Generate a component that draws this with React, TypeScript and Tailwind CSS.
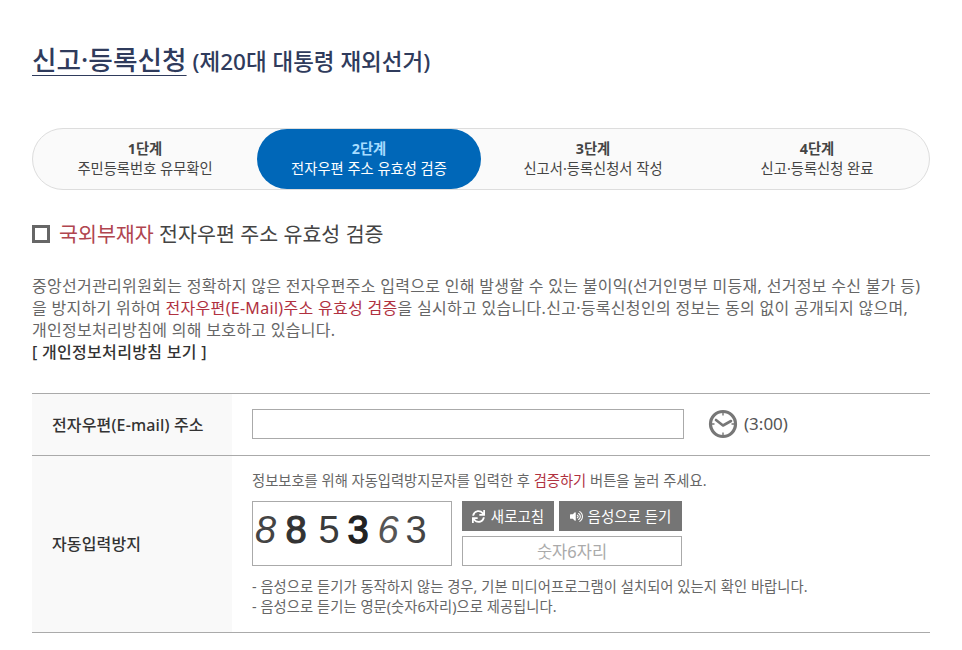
import { FaSync, FaVolumeUp } from 'react-icons/fa';

const steps = [
  { no: '1단계', label: '주민등록번호 유무확인' },
  { no: '2단계', label: '전자우편 주소 유효성 검증', active: true },
  { no: '3단계', label: '신고서·등록신청서 작성' },
  { no: '4단계', label: '신고·등록신청 완료' },
];

const digits = [
  { ch: '8', cls: 'italic text-[#444] w-[25px]' },
  { ch: '8', cls: 'text-[#333] w-[36px] [-webkit-text-stroke:1.2px_#333]' },
  { ch: '5', cls: 'text-[#3a3a3a] w-[30px]' },
  { ch: '3', cls: 'text-[#222] w-[28px] [-webkit-text-stroke:1.4px_#222]' },
  { ch: '6', cls: 'italic text-[#555] w-[32px]' },
  { ch: '3', cls: 'text-[#444] w-[24px]' },
];

function ClockIcon() {
  return (
    <svg width="30" height="30" viewBox="0 0 30 30" fill="none" stroke="#777">
      <circle cx="15" cy="15" r="12.5" strokeWidth="3.2" />
      <path d="M8 11 L15 16.5 L23 12" strokeWidth="2.6" strokeLinecap="round" strokeLinejoin="round" />
      <path d="M15 4v2.5M15 23.5v2.5M4 15h2.5M23.5 15h2.5" strokeWidth="1.4" />
    </svg>
  );
}

export default function App() {
  return (
    <div className="min-h-screen bg-white px-8 font-['Noto_Sans','Noto_Sans_CJK_KR',sans-serif] overflow-hidden">
      {/* Title */}
      <h1 className="pt-[42px] h-[128px] text-[#2f3b5c] leading-[36px] font-medium">
        <span className="text-[26.7px] underline underline-offset-[5px] decoration-1">신고·등록신청</span>
        <span className="text-[22.5px]"> (제20대 대통령 재외선거)</span>
      </h1>

      {/* Steps */}
      <div className="grid grid-cols-4 h-[62px] rounded-full border border-[#ddd] bg-[#fafafa]">
        {steps.map((s) => (
          <div
            key={s.no}
            className={`flex flex-col items-center justify-center rounded-full text-[14.3px] leading-[20px] ${s.active ? 'bg-[#0067b8] text-white' : 'text-[#444]'}`}
          >
            <span className={`font-bold ${s.active ? 'text-[#a6dcff]' : 'text-[#444]'}`}>{s.no}</span>
            <span>{s.label}</span>
          </div>
        ))}
      </div>

      {/* Section heading */}
      <div className="flex items-center gap-[9px] mt-[29px] h-[30px]">
        <span className="w-[18px] h-[18px] border-[3px] border-[#666]" />
        <h2 className="text-[20.6px] text-[#444]">
          <span className="text-[#b0454f]">국외부재자</span> 전자우편 주소 유효성 검증
        </h2>
      </div>

      {/* Intro */}
      <div className="mt-[26px] text-[16px] leading-[22px] text-[#666] tracking-[0.3px] whitespace-nowrap">
        <p>중앙선거관리위원회는 정확하지 않은 전자우편주소 입력으로 인해 발생할 수 있는 불이익(선거인명부 미등재, 선거정보 수신 불가 등)</p>
        <p>
          을 방지하기 위하여 <span className="text-[#b0313f]">전자우편(E-Mail)주소 유효성 검증</span>을 실시하고 있습니다.신고·등록신청인의 정보는 동의 없이 공개되지 않으며,
        </p>
        <p>개인정보처리방침에 의해 보호하고 있습니다.</p>
        <p className="font-medium text-[#333]">[ 개인정보처리방침 보기 ]</p>
      </div>

      {/* Form table */}
      <div className="mt-[30px] border-t border-b border-[#aaa]">
        <div className="flex h-[62px] border-b border-[#aaa]">
          <div className="w-[200px] bg-[#f9f9f9] pl-5 flex items-center text-[16px] tracking-[0.15px] font-medium text-[#333]">
            전자우편(E-mail) 주소
          </div>
          <div className="flex-1 pl-5 pb-[2px] flex items-center">
            <input className="w-[432px] h-[30px] border border-[#aaa] bg-white" />
            <span className="ml-[24px]"><ClockIcon /></span>
            <span className="ml-[6px] text-[17px] text-[#555]">(3:00)</span>
          </div>
        </div>
        <div className="flex h-[176px]">
          <div className="w-[200px] bg-[#f9f9f9] pl-5 flex items-center text-[16px] tracking-[0.15px] font-medium text-[#333]">
            자동입력방지
          </div>
          <div className="flex-1 pl-5 pt-[15px]">
            <p className="text-[14.3px] leading-[20px] text-[#666]">
              정보보호를 위해 자동입력방지문자를 입력한 후 <span className="text-[#b0313f]">검증하기</span> 버튼을 눌러 주세요.
            </p>
            <div className="flex gap-[10px] mt-[10px]">
              <div className="w-[200px] h-[65px] border border-[#aaa] flex items-center pb-[6px] text-[38px] font-['Liberation_Sans',sans-serif]">
                {digits.map((d, i) => (
                  <span key={i} className={`text-center ${d.cls}`}>{d.ch}</span>
                ))}
              </div>
              <div className="w-[220px]">
                <div className="flex gap-[5px]">
                  <button className="w-[92px] h-[30px] pt-[1px] bg-[#757575] text-white text-[14.5px] flex items-center justify-center gap-[6px]">
                    <FaSync size={13} />새로고침
                  </button>
                  <button className="w-[123px] h-[30px] pt-[1px] bg-[#757575] text-white text-[14.5px] flex items-center justify-center gap-[5px]">
                    <FaVolumeUp size={13} />음성으로 듣기
                  </button>
                </div>
                <input
                  placeholder="숫자6자리"
                  className="mt-[5px] w-[220px] h-[30px] border border-[#aaa] text-center text-[16.5px] placeholder:text-[#aaa]"
                />
              </div>
            </div>
            <div className="mt-[11px] text-[14.3px] tracking-[0.05px] leading-[20px] text-[#666]">
              <p>- 음성으로 듣기가 동작하지 않는 경우, 기본 미디어프로그램이 설치되어 있는지 확인 바랍니다.</p>
              <p>- 음성으로 듣기는 영문(숫자6자리)으로 제공됩니다.</p>
            </div>
          </div>
        </div>
      </div>
    </div>
  );
}
